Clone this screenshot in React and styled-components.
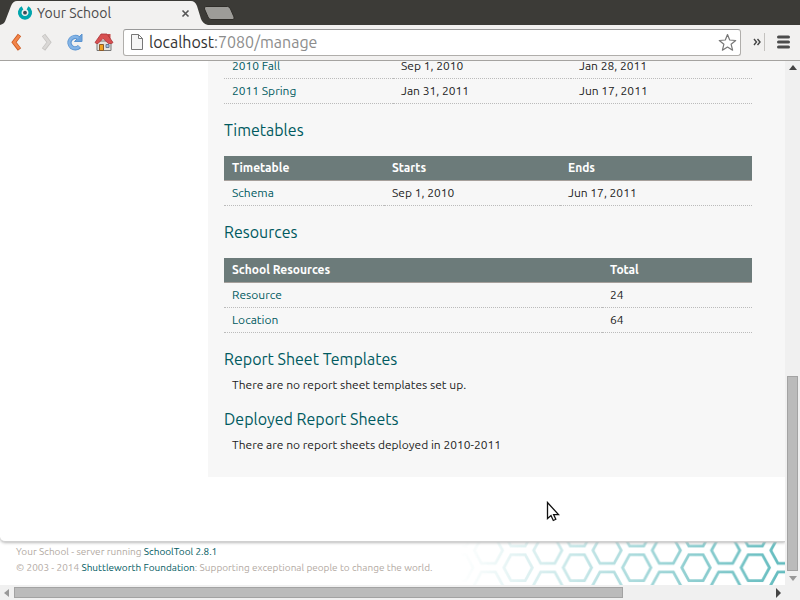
import React from "react";
import styled, { createGlobalStyle, css } from "styled-components";

const Global = createGlobalStyle`
  * { box-sizing: border-box; }
  body { margin: 0; background: #fff; color: #222; font: 12px/16px "Ubuntu", "Noto Sans", sans-serif; }
  h2, p { margin: 0; font-weight: 400; }
  a { text-decoration: none; }
`;

const Window = styled.div`
  display: flex;
  flex-direction: column;
  height: 100vh;
  overflow: hidden;
`;

const TabStrip = styled.header`
  display: flex;
  flex: none;
  align-items: flex-end;
  height: 25px;
  background: #3c3b37;
`;

const Tab = styled.div`
  display: grid;
  flex: none;
  width: 208px;
  height: 25px;
  > * { grid-area: 1 / 1; }
`;

const TabShape = styled.svg`
  display: block;
`;

const TabContent = styled.div`
  display: flex;
  align-items: center;
  gap: 4px;
  padding: 1px 18px 0 17px;
  color: #4b4a4a;
  font-size: 14px;
`;

const TabTitle = styled.span`
  flex: 1;
`;

const PlainButton = styled.button`
  display: flex;
  flex: none;
  align-items: center;
  justify-content: center;
  margin: 0;
  padding: 0;
  border: 0;
  background: none;
  color: #444;
  font: inherit;
`;

const NewTab = styled(PlainButton)`
  align-self: center;
  margin-left: -5px;
`;

const Toolbar = styled.nav`
  display: flex;
  flex: none;
  align-items: center;
  height: 36px;
  padding: 0 10px 1px 6px;
  border-bottom: 1px solid #a5a3a0;
  background: #f2f1f0;
`;

const NavButton = styled(PlainButton)`
  width: 22px;
  height: 24px;
  margin-right: 7px;
`;

const Address = styled.label`
  display: flex;
  flex: 1;
  align-items: center;
  gap: 6px;
  height: 27px;
  margin: 0 12px 0 1px;
  padding: 0 3px 0 7px;
  border: 1px solid #b0aeab;
  border-top-color: #999;
  border-radius: 3px;
  background: #fff;
`;

const AddressText = styled.div`
  flex: 1;
  color: #8c8c8c;
  font-size: 16px;
  line-height: 22px;
  b { color: #333; font-weight: 400; }
`;

const Overflow = styled(PlainButton)`
  height: 18px;
  padding-right: 3px;
  border-right: 1px solid #c4c2bf;
`;

const Menu = styled(PlainButton)`
  margin-left: 12px;
`;

const Browser = styled.div`
  display: grid;
  flex: 1;
  grid-template-columns: minmax(0, 1fr) 15px;
  grid-template-rows: minmax(0, 1fr) 15px;
  min-height: 0;
  background: #f0f0f0;
`;

const Viewport = styled.div`
  display: flex;
  flex-direction: column;
  justify-content: flex-end;
  overflow: hidden;
  background: #fff;
`;

const Page = styled.div`
  position: relative;
  flex: none;
  padding: 0 0 64px 208px;
  border-bottom: 1px solid #d0d0d0;
  border-bottom-left-radius: 5px;
  background: #fff;
  box-shadow: 0 1px 3px #bbb;
`;

const Main = styled.main`
  padding: 0 33px 24px 16px;
  background: #f7f7f7;
`;

const Heading = styled.h2`
  padding: 16px 0;
  color: #005a5f;
  font-size: 16px;
  line-height: 20px;
`;

const Note = styled.p`
  margin-top: -8px;
  padding: 0 8px;
`;

const Table = styled.table`
  width: 100%;
  border-collapse: separate;
  border-spacing: 0;
  table-layout: fixed;
`;

const cell = css`
  height: 25px;
  padding: 0 8px;
  text-align: left;
`;

const Head = styled.th`
  ${cell}
  width: ${(p) => p.$width};
  border-bottom: 1px solid #a6a09c;
  background: #6c7b7a;
  color: #fff;
  font-weight: 700;
`;

const Cell = styled.td`
  ${cell}
  width: ${(p) => p.$width};
  border-bottom: 1px dotted #bbb;
`;

const Link = styled.a`
  color: #005a5f;
`;

const Footer = styled.footer`
  display: flex;
  flex: none;
  height: 43px;
`;

const Credits = styled.div`
  flex: 1;
  padding: 2px 0 0 16px;
  color: #b3aaa3;
  font-size: 10px;
  white-space: nowrap;
`;

const Honeycomb = styled.svg`
  flex: none;
  display: block;
`;

const VerticalBar = styled.div`
  display: flex;
  flex-direction: column;
  align-items: center;
`;

const HorizontalBar = styled.div`
  display: flex;
  align-items: center;
`;

const Thumb = styled.div`
  border: 1px solid #a3a3a3;
  background: #bbb;
`;

const VerticalThumb = styled(Thumb)`
  flex: 193;
  width: 11px;
`;

const HorizontalThumb = styled(Thumb)`
  flex: 607;
  height: 11px;
`;

const Space = styled.div`
  flex: ${(p) => p.$grow};
`;

const Pointer = styled.svg`
  position: fixed;
  left: 546px;
  top: 501px;
`;

const arrowPaths = {
  up: "M3 9 7 4 11 9z",
  down: "M3 5h8L7 10z",
  left: "M9 3v8L4 7z",
  right: "M5 2v10l5-5z",
};

const Arrow = ({ dir, color }) => (
  <svg width="14" height="14" viewBox="0 0 14 14"><path d={arrowPaths[dir]} fill={color} /></svg>
);

const terms = [["2010 Fall", "Sep 1, 2010", "Jan 28, 2011"], ["2011 Spring", "Jan 31, 2011", "Jun 17, 2011"]];

function DataTable({ label, head, rows, widths }) {
  return (
    <Table aria-label={label}>
      {head && (
        <thead><tr>{head.map((h, i) => <Head key={h} $width={widths[i]}>{h}</Head>)}</tr></thead>
      )}
      <tbody>
        {rows.map((row) => (
          <tr key={row[0]}>
            {row.map((value, i) => (
              <Cell key={i} $width={widths[i]}>{i === 0 ? <Link href="#">{value}</Link> : value}</Cell>
            ))}
          </tr>
        ))}
      </tbody>
    </Table>
  );
}

export default function App() {
  return (
    <Window>
      <Global />
      <TabStrip>
        <Tab>
          <TabShape width="208" height="25" viewBox="0 0 208 25">
            <path d="M0 25C4 24 5 22 6 19L11 6Q13 1 17 1H191Q195 1 197 6L201 19Q203 24 208 25z" fill="#f2f1f0" />
          </TabShape>
          <TabContent>
            <svg width="16" height="16" viewBox="0 0 16 16">
              <path d="M5.500 2.900A5.300 5.300 0 1 0 10.500 2.900" fill="none" stroke="#00a5ad" strokeWidth="3.600" />
              <circle cx="8" cy="7.700" r="1.900" fill="#3c4a55" />
            </svg>
            <TabTitle>Your School</TabTitle>
            <PlainButton aria-label="Close tab">
              <svg width="9" height="9" viewBox="0 0 9 9"><path d="M1.500 1.500l6 6m0-6l-6 6" stroke="#555" strokeWidth="1.600" /></svg>
            </PlainButton>
          </TabContent>
        </Tab>
        <NewTab aria-label="New tab">
          <svg width="32" height="16" viewBox="0 0 32 16">
            <path d="M3 1.500H24.500Q26.500 1.500 27.500 4L31 12Q31.500 14.500 30 14.500H8Q6 14.500 5 12L1.500 4Q1 1.500 3 1.500z" fill="#9d9c98" stroke="#2f2d29" />
          </svg>
        </NewTab>
      </TabStrip>
      <Toolbar>
        <NavButton aria-label="Back">
          <svg width="22" height="24" viewBox="0 0 22 24"><path d="M13.500 5L8 12.200l5.500 7.200" fill="none" stroke="#cc5a22" strokeWidth="4.200" /><path d="M13.200 5.600L8 12.200l5.200 6.600" fill="none" stroke="#f2854a" strokeWidth="2.600" /></svg>
        </NavButton>
        <NavButton aria-label="Forward">
          <svg width="22" height="24" viewBox="0 0 22 24"><path d="M8.500 5l5.500 7.200-5.500 7.200" fill="none" stroke="#c6c4c2" strokeWidth="4.200" /><path d="M8.800 5.600l5.200 6.600-5.200 6.600" fill="none" stroke="#dad8d6" strokeWidth="2.600" /></svg>
        </NavButton>
        <NavButton aria-label="Reload">
          <svg width="22" height="24" viewBox="0 0 22 24">
            <path d="M15.500 16.500A5.700 5.700 0 1 1 14.500 8" fill="none" stroke="#5a93cf" strokeWidth="4.400" />
            <path d="M18 4V11.500H10.500z" fill="#6ea4dc" stroke="#5a93cf" />
            <path d="M15 16.700A5.700 5.700 0 1 1 14.500 8" fill="none" stroke="#84b4e6" strokeWidth="2.600" />
          </svg>
        </NavButton>
        <NavButton aria-label="Home">
          <svg width="22" height="24" viewBox="0 0 22 24">
            <path d="M4 11h14v9.500H4z" fill="#e6e4df" stroke="#777" />
            <path d="M14.500 4h3v5h-3z" fill="#c94a4a" />
            <path d="M8 4h6l6 8.500-1.500 1h-3L10 8.500l-5 5H3.500L2 12.500z" fill="#d84f50" stroke="#a83338" strokeWidth=".8" />
            <path d="M6.500 14.500h4v6h-4z" fill="#f0a21e" stroke="#8b5a2b" />
            <path d="M13 14.500h3v3h-3z" fill="#9dbce0" stroke="#6a7b94" />
          </svg>
        </NavButton>
        <Address>
          <svg width="12" height="16" viewBox="0 0 12 16"><path d="M.5.5H7.500L11.500 4.500V15.500H.5zM7.500.5V4.500H11.500" fill="#f5f5f5" stroke="#777" /></svg>
          <AddressText><b>localhost</b>:7080/manage</AddressText>
          <PlainButton aria-label="Bookmark this page">
            <svg width="19" height="19" viewBox="0 0 19 19"><path d="M9.500 1.500l2.200 5.500 6 .5-4.600 3.700 1.500 6-5.100-3.200-5.100 3.200 1.500-6L1.300 7.500l6-.5z" fill="none" stroke="#777" strokeWidth="1.200" strokeLinejoin="round" /></svg>
          </PlainButton>
        </Address>
        <Overflow aria-label="More tools">
          <svg width="8" height="8" viewBox="0 0 8 8"><path d="M1 1l2.500 3L1 7M4.500 1L7 4 4.500 7" fill="none" stroke="#444" strokeWidth="1.400" /></svg>
        </Overflow>
        <Menu aria-label="Menu">
          <svg width="13" height="14" viewBox="0 0 13 14"><path d="M1.500 2h10m-10 5h10m-10 5h10" stroke="#4c4c4c" strokeWidth="3" strokeLinecap="round" /></svg>
        </Menu>
      </Toolbar>
      <Browser>
        <Viewport>
          <Page>
            <Main>
              <DataTable label="Terms" rows={terms} widths={["169px", "178px", "auto"]} />
              <Heading>Timetables</Heading>
              <DataTable label="Timetables" head={["Timetable", "Starts", "Ends"]} rows={[["Schema", "Sep 1, 2010", "Jun 17, 2011"]]} widths={["160px", "176px", "auto"]} />
              <Heading>Resources</Heading>
              <DataTable label="Resources" head={["School Resources", "Total"]} rows={[["Resource", "24"], ["Location", "64"]]} widths={["378px", "auto"]} />
              <Heading>Report Sheet Templates</Heading>
              <Note>There are no report sheet templates set up.</Note>
              <Heading>Deployed Report Sheets</Heading>
              <Note>There are no report sheets deployed in 2010-2011</Note>
            </Main>
          </Page>
          <Footer>
            <Credits>
              <p>Your School - server running <Link href="#">SchoolTool 2.8.1</Link></p>
              <p>© 2003 - 2014 <Link href="#">Shuttleworth Foundation</Link>: Supporting exceptional people to change the world.</p>
            </Credits>
            <Honeycomb width="325" height="43" viewBox="0 0 325 43">
              <defs>
                <linearGradient id="fade"><stop offset="0" stopColor="#fff" stopOpacity="0" /><stop offset="1" stopColor="#fff" /></linearGradient>
                <mask id="fadeMask"><rect width="325" height="43" fill="url(#fade)" /></mask>
                <pattern id="cells" width="59.3" height="34.600" x="28.400" y="8.400" patternUnits="userSpaceOnUse">
                  <g fill="none" stroke="#62bbbe" strokeWidth="2.800">
                    <path d="M15.500 17.300l7.100-13h14.200l7.100 13-7.100 13H22.600z" />
                    <path d="M-14.200 0l7.100-13H7.100l7.100 13-7.100 13H-7.100zM-14.200 34.600l7.100-13H7.100l7.100 13-7.100 13H-7.100zM45.200 0l7.100-13H66.500l7.100 13-7.100 13H52.300zM45.200 34.600l7.100-13H66.500l7.100 13-7.100 13H52.300z" />
                  </g>
                </pattern>
              </defs>
              <rect width="325" height="43" fill="url(#cells)" mask="url(#fadeMask)" />
            </Honeycomb>
          </Footer>
        </Viewport>
        <VerticalBar>
          <Arrow dir="up" color="#444" />
          <Space $grow={301} />
          <VerticalThumb />
          <Arrow dir="down" color="#999" />
        </VerticalBar>
        <HorizontalBar>
          <Arrow dir="left" color="#999" />
          <HorizontalThumb />
          <Space $grow={148} />
          <Arrow dir="right" color="#444" />
        </HorizontalBar>
      </Browser>
      <Pointer width="14" height="22" viewBox="0 0 14 22">
        <path d="M1.500 1.500V17.500L5 14.500l2.300 5 2.500-1.200-2.200-4.700H12.500z" fill="#fff" stroke="#111" strokeWidth="1.300" />
      </Pointer>
    </Window>
  );
}
